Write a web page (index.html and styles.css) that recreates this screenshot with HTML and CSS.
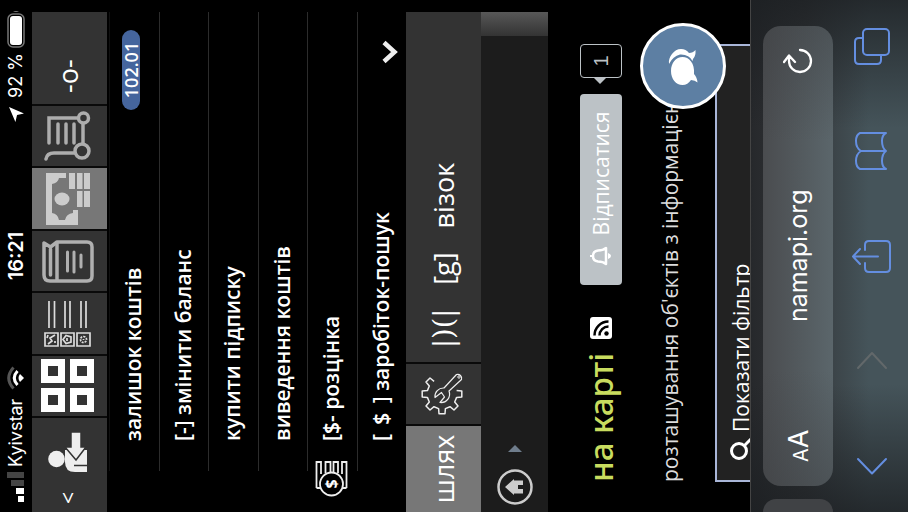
FILE: index.html
```html
<!DOCTYPE html>
<html lang="uk">
<head>
<meta charset="utf-8">
<title>namapi.org</title>
<link rel="stylesheet" href="styles.css">
</head>
<body>
<div class="phone">
  <header class="status">
    <div class="status-side">
      <svg width="32" height="18" viewBox="0 0 32 18"><path fill="#fff" d="M0 11h6v6H0zM8 9h6v8H8z"/><path fill="#444" d="M16 4h6v13h-6zM24 0h6v17h-6z"/></svg>
      <span>Kyivstar</span>
      <svg class="wifi" width="24" height="18" viewBox="0 0 24 18" fill="none" stroke-width="3"><path stroke="#555" d="M1.500 6.500Q12-3 22.500 6.500"/><path stroke="#fff" d="M5 10.500Q12 4 19 10.500"/><path fill="#fff" d="M12 17L8 13Q12 10 16 13Z"/></svg>
    </div>
    <strong class="clock">16:21</strong>
    <div class="status-side status-end">
      <svg width="15" height="15" viewBox="0 0 14 14"><path fill="#fff" d="M14 0L8 14L6.500 7.500L0 6Z"/></svg>
      <span>92 %</span>
      <svg class="battery" width="38" height="18" viewBox="0 0 38 18"><rect x="1" y="1" width="33" height="16" rx="5" fill="none" stroke="#777" stroke-width="1.500"/><rect x="3" y="3" width="29" height="12" rx="3" fill="#fff"/><path fill="#777" d="M36 6q2 3 0 6z"/></svg>
    </div>
  </header>

  <nav class="bar bar-icons">
    <button class="cell cell-user" aria-label="Профіль">
      <span class="less">&lt;</span>
      <svg width="40" height="40" viewBox="0 0 40 40"><circle cx="13" cy="8.500" r="8.300" fill="#eee"/><path fill="#eee" d="M22 39H0V27Q0 17 10 17H22Z"/><path stroke="#333" stroke-width="1.500" d="M6.500 26V39"/><path fill="#eee" stroke="#333" stroke-width="1.500" d="M12 28L25 17V23H40V33H25V38Z"/></svg>
    </button>
    <button class="cell" aria-label="Сітка">
      <svg width="53" height="53" viewBox="0 0 53 53"><path fill="#fff" fill-rule="evenodd" d="M0 0H24V24H0ZM7 7V17H17V7ZM29 0H53V24H29ZM36 7V17H46V7ZM0 29H24V53H0ZM7 36V46H17V36ZM29 29H53V53H29ZM36 36V46H46V36Z"/></svg>
    </button>
    <button class="cell" aria-label="Список">
      <svg width="47" height="47" viewBox="0 0 47 47" fill="none" stroke="#ddd" stroke-width="1.700"><path d="M1 1H14V14H1ZM1 17H14V30H1ZM1 33H14V46H1Z"/><path d="M19 5H46M19 10.500H46M19 21H46M19 26H46M19 37H46M19 42H46"/><path d="M3 4L6 8 9 6 12 11M9 3L12 4M4 11H6"/><path d="M7.500 19L11.500 22 10 27H5L3.500 22ZM6 23H9"/><circle cx="7.500" cy="39.500" r="3" stroke-dasharray="2 1"/><path d="M7 39.500H8"/></svg>
    </button>
    <button class="cell" aria-label="Книга">
      <svg width="43" height="52" viewBox="0 0 43 52" fill="none" stroke="#b0b0b0" stroke-width="3.500" stroke-linecap="round" stroke-linejoin="round"><path d="M40 2H8Q2 2 2 8V45Q2 50 7 50H36Q41 50 41 45V15L36 8.500Z"/><path d="M3 15H40"/><path d="M8 8.500H34"/><path stroke-width="3" d="M12 25.500H31M11 32H31M16 39H28"/></svg>
    </button>
    <button class="cell active" aria-label="Гроші">
      <svg width="53" height="46" viewBox="0 0 53 46" fill="#ccc"><path fill-rule="evenodd" d="M0 1H52V21H47V14Q42 13 41 7H12Q11 13 5 14V20Q11 21 12 28H15V33H0Z"/><ellipse cx="26" cy="17" rx="6.500" ry="7.500"/><path d="M36 24H52V30H36ZM36 32H52V37.500H36ZM36 39H52V45H36ZM18 32H34V37.500H18ZM18 39H34V45H18Z"/></svg>
    </button>
    <button class="cell" aria-label="Кошик">
      <svg width="50" height="48" viewBox="0 0 50 48" fill="none" stroke="#adadad" stroke-width="3.500" stroke-linecap="round"><path d="M18 5H43V34M18 14H37M18 22H37M18 30H37M18 39H37M2 2Q8 3 8 10V30"/><circle cx="43" cy="39.500" r="5"/><circle cx="10" cy="38" r="7"/></svg>
    </button>
    <button class="cell cell-zero">-o-</button>
  </nav>

  <ul class="menu">
    <li><a href="#balance">залишок коштів</a><span class="badge">102.01</span></li>
    <li><a href="#change">[-] змінити баланс</a></li>
    <li><a href="#subscribe">купити підписку</a></li>
    <li><a href="#withdraw">виведення коштів</a></li>
    <li>
      <svg class="coin" width="37" height="33" viewBox="0 0 37 33" fill="none" stroke="#eee" stroke-width="1.800"><path d="M9 1.500H35V6H23M24 10.500H35V15.500H25M25 18.500H35V23H24M23 27H35V31.500H9M9 1.500V6M9 27V31.500"/><circle cx="13" cy="16.500" r="11.500" fill="#000"/><text x="13" y="22" text-anchor="middle">$</text></svg>
      <a href="#price">[$- розцінка</a>
    </li>
    <li><a href="#earn">[ <span class="coin-sign">$</span> ] заробіток-пошук</a><svg class="chevron" width="24" height="18" viewBox="0 0 24 18"><path fill="none" stroke="#eee" stroke-width="4.500" d="M2.500 3L12 13.500L21.500 3"/></svg></li>
  </ul>

  <nav class="bar">
    <button class="cell cell-path active">шлях</button>
    <button class="cell" aria-label="Налаштування">
      <svg width="42" height="42" viewBox="0 0 42 42" fill="none" stroke="#eee" stroke-width="1.500" stroke-linejoin="round"><path d="M33.700 13.100L37 9 33 5 29 8.300 24.400 6.400 24 1.200H18L17.600 6.400 13 8.300 9 5 5 9 8.300 13 6.400 17.600 1.200 18V24L6.400 24.400 8.300 29 5 33 9 37 13 33.700 17.600 35.600 18 40.800H24L24.400 35.600"/><path stroke-width="1.200" d="M27 23L40.500 35.500A4 4 0 0 1 35.500 40.500L24 28A8.500 8.500 0 0 1 12.500 19L18 23.500 22.500 20.500 17.500 14A8.500 8.500 0 0 1 27 23Z"/><circle cx="38" cy="38" r="1.200" stroke-width="1"/></svg>
    </button>
    <div class="links"><a class="lens" href="#lens">|)(|</a><a href="#g">[g]</a><a href="#cart">візок</a></div>
  </nav>

  <nav class="crumbs">
    <a href="#home" aria-label="Головна"><svg width="36" height="36" viewBox="0 0 36 36"><circle cx="18" cy="18" r="16.500" fill="none" stroke="#ccc" stroke-width="2.500"/><path fill="#ccc" d="M18 8L26 17H24.500V26H20V21H16V26H11.500V17H10Z"/></svg></a>
    <svg width="7" height="14" viewBox="0 0 7 14"><path fill="#6f7d8c" d="M0 0L7 7L0 14Z"/></svg>
  </nav>

  <main class="page">
    <div class="heading">
      <h1>на карті</h1>
      <a class="rss" href="#rss" aria-label="RSS"><svg width="22" height="22" viewBox="0 0 22 22"><rect width="22" height="22" rx="3" fill="#fff"/><circle cx="5.500" cy="16.500" r="2.200"/><path fill="none" stroke="#000" stroke-width="2.500" d="M3.500 9.500A9 9 0 0 1 12.500 18.500M3.500 4.500A14 14 0 0 1 17.500 18.500"/></svg></a>
      <button class="unsubscribe"><svg width="22" height="22" viewBox="0 0 22 22"><path fill="none" stroke="#fff" stroke-width="2.500" stroke-linejoin="round" d="M3 16Q5.500 13 5.500 8Q6 3 11 3Q16 3 16.500 8Q16.500 13 19 16Z"/><path fill="#fff" d="M8 18H14Q13 21 11 21Q9 21 8 18ZM10 0h2v3h-2z"/></svg>Відписатися</button>
      <a class="count" href="#subscribers">1</a>
    </div>
    <p class="about">розташування об'єктів з інформацією</p>
    <button class="filter"><svg width="22" height="22" viewBox="0 0 22 22" fill="none" stroke="#fff" stroke-width="3"><circle cx="9" cy="9" r="7.500"/><path d="M14.500 14.500L21 21"/></svg>Показати фільтр</button>
    <button class="chat" aria-label="Чат"><svg width="40" height="34" viewBox="0 0 40 34" fill="#fff"><path d="M15 5C7 5 1 10 1 16.500C1 20 3 23 6 25Q6 29 3.500 31.500Q9 31 12 28C23 29 29 23 29 16.500C29 10 23 5 15 5Z"/><path d="M22 3C29 2 37 8 37 15Q37 20 33 23Q33 27 36 29.500Q30 30 27 27L25 26.500Q32 23 31.500 14Q30 7 22 3Z"/></svg></button>
  </main>

  <footer class="browser">
    <div class="tabs">
      <span class="tab-prev"></span>
      <div class="address">
        <button class="reader" aria-label="Розмір тексту"><small>A</small>A</button>
        <span class="domain">namapi.org</span>
        <button aria-label="Оновити"><svg width="26" height="30" viewBox="0 0 26 30" fill="none" stroke="#fff" stroke-width="2.300" stroke-linecap="round" stroke-linejoin="round"><path d="M24 17A11 11 0 1 1 13 6H17M12 1L18.500 6L12 12"/></svg></button>
      </div>
    </div>
    <nav class="tools">
      <button aria-label="Назад"><svg width="40" height="40" viewBox="0 0 40 40"><path d="M27 6L12.500 20L27 34"/></svg></button>
      <button class="off" aria-label="Вперед"><svg width="40" height="40" viewBox="0 0 40 40"><path d="M13 6L28 20L13 34"/></svg></button>
      <button aria-label="Поділитися"><svg width="40" height="40" viewBox="0 0 40 40"><path d="M13 13H8Q4 13 4 17V34Q4 38 8 38H31Q35 38 35 34V17Q35 13 31 13H26M19.500 26V1M12 8L19.500 1L27 8"/></svg></button>
      <button aria-label="Закладки"><svg width="40" height="40" viewBox="0 0 40 40"><path d="M20 9Q17 4 10 4Q4 4 2 8V34Q4 30 10 30Q17 30 20 34Q23 30 30 30Q36 30 38 34V8Q36 4 30 4Q23 4 20 9V34"/></svg></button>
      <button aria-label="Вкладки"><svg width="40" height="40" viewBox="0 0 40 40"><rect x="11" y="11" width="26" height="26" rx="4"/><path d="M11 29H6Q2 29 2 25V7Q2 3 6 3H24Q28 3 28 7V11"/></svg></button>
    </nav>
  </footer>
</div>
</body>
</html>
```
FILE: styles.css
```css
* { box-sizing: border-box; }

body {
  margin: 0;
  overflow: hidden;
  background: #000;
  color: #fff;
  font-family: "Open Sans", "Noto Sans", sans-serif;
}

button {
  padding: 0;
  border: 0;
  background: none;
  color: inherit;
  font: inherit;
}

a { color: inherit; text-decoration: none; }
svg { display: block; flex: none; }

/* A portrait screen held sideways; the margin gives back the height it no longer takes */
.phone {
  display: flex;
  flex-direction: column;
  width: 100vh;
  height: 100vw;
  margin-bottom: calc(100vh - 100vw);
  transform: rotate(-90deg) translateX(-100%);
  transform-origin: 0 0;
}

.status {
  display: grid;
  grid-template-columns: 1fr auto 1fr;
  align-items: center;
  height: 32px;
  padding: 0 10px;
  font: 18px/32px Inter, sans-serif;
}
.status-side { display: flex; align-items: center; gap: 3px; }
.status-end { justify-content: flex-end; gap: 9px; }
.wifi { margin-left: 6px; }
.battery { margin-left: -4px; }
.clock { font-size: 20px; font-weight: 600; }

.bar {
  display: flex;
  height: 75px;
  margin-right: 12px;
  background: #333;
  font-size: 27px;
  font-weight: 500;
}
.bar-icons {
  display: grid;
  grid-template-columns: 94px repeat(5, 1fr) 94px;
}
.cell {
  display: flex;
  align-items: center;
  justify-content: center;
  min-width: 62px;
  padding-bottom: 4px;
  border-left: 2px solid #0a0a0a;
}
.cell:first-child { border-left: 0; }
.cell-user { justify-content: flex-start; gap: 20px; padding-left: 8px; }
.cell-zero { justify-content: flex-start; padding-left: 11px; }
.less { font-size: 21px; }
.cell-path { width: 86px; padding-bottom: 0; }
.active { background: #777; }

.links {
  display: flex;
  flex: 1;
  align-items: center;
  gap: 24px;
  padding: 0 0 0 14px;
  border-left: 2px solid #0a0a0a;
}
.lens { font-family: "DejaVu Serif", serif; }

.menu {
  display: grid;
  grid-auto-rows: 1fr;
  height: 299px;
  margin: 0 12px 0 41px;
  padding: 2px 0 0;
  list-style: none;
  font-size: 21px;
  font-weight: 600;
}
.menu li {
  display: flex;
  align-items: center;
  justify-content: space-between;
  padding: 0 18px 2px 30px;
  border-top: 1px solid #2c2c2c;
}
.menu li:first-child { border-color: #111; }
.badge {
  width: 80px;
  margin-bottom: 4px;
  border-radius: 9px;
  background: #45659d;
  font-size: 18px;
  line-height: 18px;
  text-align: center;
}
.coin { margin: 0 19px 0 -56px; }
.coin + a { flex: 1; }
.coin text { fill: #fff; stroke: none; font-size: 16px; font-weight: 700; }
.coin-sign { padding: 0 4px; }
.chevron { align-self: flex-end; margin: 0 10px 5px 0; }

.crumbs {
  display: flex;
  align-items: center;
  gap: 17px;
  height: 67px;
  margin-right: 12px;
  padding-left: 7px;
  background: linear-gradient(to right, #333, #585858) right / 24px 100% no-repeat #1c1c1c;
}

.page {
  position: relative;
  flex: 1;
  min-height: 0;
  padding: 32px 44px 0 30px;
  overflow: hidden;
}
.heading { display: flex; align-items: center; height: 42px; }
h1 {
  margin: 0;
  color: #c8dc5f;
  font-family: "Noto Sans", sans-serif;
  font-size: 33px;
  font-weight: 500;
  line-height: 42px;
}
.rss { margin: 0 32px 0 14px; }
.unsubscribe {
  display: flex;
  flex: 1;
  align-items: center;
  justify-content: center;
  gap: 10px;
  height: 42px;
  border-radius: 4px;
  background: #bcc2c6;
  font-size: 21px;
}
.count {
  position: relative;
  width: 34px;
  height: 42px;
  margin-left: 16px;
  border: 1px solid #bcc2c6;
  border-radius: 4px;
  color: #bcc2c6;
  font: 20px/40px "Liberation Sans", sans-serif;
  text-align: center;
}
.count::before {
  content: "";
  position: absolute;
  top: 13px;
  left: -7px;
  border: solid transparent;
  border-width: 6px 6px 6px 0;
  border-right-color: #bcc2c6;
}
.about {
  margin: 33px 0 30px;
  color: #ddd;
  font-size: 21px;
  line-height: 30px;
  white-space: nowrap;
}
.filter {
  display: flex;
  align-items: center;
  gap: 6px;
  width: 100%;
  height: 52px;
  padding-left: 20px;
  border: 2px solid #a9b6d8;
  background: #222;
  font-size: 21px;
}
.chat {
  position: absolute;
  top: 92px;
  right: 23px;
  display: grid;
  place-items: center;
  width: 86px;
  height: 86px;
  border: 3px solid #fff;
  border-radius: 50%;
  background: #5d7fa3;
}

.browser {
  height: 158px;
  padding-top: 12px;
  border-top: 1px solid #444;
  background:
    linear-gradient(to right, #1c1f22cc, #1c1f2200 25% 75%, #1c1f22cc),
    linear-gradient(#26282b, #35383b 35%, #45545a 75%);
  font-family: Inter, sans-serif;
}
.tabs { display: flex; gap: 13px; height: 70px; }
.tab-prev {
  width: 13px;
  border-radius: 0 18px 18px 0;
  background: #404245;
}
.address {
  display: flex;
  flex: 1;
  align-items: center;
  justify-content: space-between;
  margin-right: 26px;
  padding: 0 22px 0 24px;
  border-radius: 18px;
  background:
    linear-gradient(to right, #3e404380, #3e404300 25% 75%, #3e404380),
    linear-gradient(#4a4c4f, #5b666b);
}
.domain { margin-right: 8px; font-size: 25px; }
.reader { font-size: 27px; }
.reader small { font-size: 20px; }
.tools {
  display: flex;
  justify-content: space-between;
  padding: 19px 26px 0;
}
.tools svg {
  fill: none;
  stroke: #648ee0;
  stroke-width: 2;
  stroke-linejoin: round;
  stroke-linecap: round;
}
.tools .off svg { stroke: #62686a; }
```
